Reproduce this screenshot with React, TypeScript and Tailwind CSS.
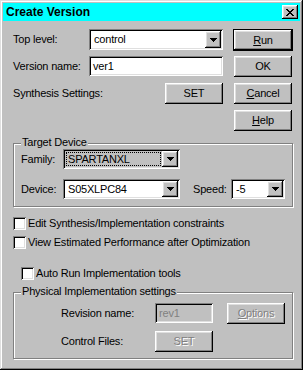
import React from 'react';

const raised = 'shadow-[inset_-1px_-1px_#000,inset_1px_1px_#fff,inset_-2px_-2px_#808080,inset_2px_2px_#dfdfdf]';
const sunken = 'shadow-[inset_1px_1px_#808080,inset_-1px_-1px_#fff,inset_2px_2px_#000,inset_-2px_-2px_#dfdfdf]';

const Arrow = () => (
    <svg width="7" height="4" viewBox="0 0 7 4" shapeRendering="crispEdges">
        <path d="M0 0h7v1H0z M1 1h5v1H1z M2 2h3v1H2z M3 3h1v1H3z" fill="#000" />
    </svg>
);

const CloseX = () => (
    <svg width="8" height="7" viewBox="0 0 8 7" shapeRendering="crispEdges">
        <path
            d="M0 0h2v1H0z M6 0h2v1H6z M1 1h2v1H1z M5 1h2v1H5z M2 2h4v1H2z M3 3h2v1H3z M2 4h4v1H2z M1 5h2v1H1z M5 5h2v1H5z M0 6h2v1H0z M6 6h2v1H6z"
            fill="#000"
        />
    </svg>
);

const Btn = ({ children, className = '', disabled = false }: { children: React.ReactNode; className?: string; disabled?: boolean }) => (
    <div
        className={`flex items-center justify-center bg-[#c0c0c0] ${raised} ${className} ${
            disabled ? 'text-[#808080] [text-shadow:1px_1px_0_#fff]' : ''
        }`}
    >
        <span className="leading-none">{children}</span>
    </div>
);

const Combo = ({ value, className = '', focus = false }: { value: string; className?: string; focus?: boolean }) => (
    <div className={`flex items-stretch p-[2px] ${sunken} ${focus ? 'bg-[#c0c0c0]' : 'bg-white'} ${className}`}>
        <div className="flex-1 flex items-center p-[1px]">
            <div className={`flex-1 h-full flex items-center pl-[1px] ${focus ? 'border border-dotted border-black' : 'border border-transparent'}`}>
                <span className="leading-none">{value}</span>
            </div>
        </div>
        <div className={`w-[16px] flex items-center justify-center bg-[#c0c0c0] ${raised}`}>
            <Arrow />
        </div>
    </div>
);

const Check = ({ label, className = '' }: { label: string; className?: string }) => (
    <div className={`flex items-center h-[13px] ${className}`}>
        <div className={`w-[13px] h-[13px] bg-white ${sunken}`} />
        <span className="ml-[2px] leading-none">{label}</span>
    </div>
);

const Group = ({ label, className = '', children }: { label: string; className?: string; children: React.ReactNode }) => (
    <div className={`relative border border-[#808080] shadow-[inset_1px_1px_#fff,1px_1px_#fff] ${className}`}>
        <span className="absolute left-[7px] top-[-7px] bg-[#c0c0c0] px-[1px] leading-none">{label}</span>
        {children}
    </div>
);

export default function App() {
    return (
        <div className="w-[303px] h-[370px] bg-[#c0c0c0] p-[3px] shadow-[inset_-1px_-1px_#000,inset_1px_1px_#dfdfdf,inset_-2px_-2px_#808080,inset_2px_2px_#fff] font-['Liberation_Sans',Arial,sans-serif] text-[11px] tracking-[-0.2px] text-black">
            {/* Title bar */}
            <div className="h-[18px] bg-[#00ffff] flex items-center justify-between pl-[3px] pr-[2px]">
                <span className="text-[12px] font-bold leading-none tracking-normal">Create Version</span>
                <div className={`w-[16px] h-[14px] bg-[#c0c0c0] flex items-center justify-center ${raised}`}>
                    <CloseX />
                </div>
            </div>

            <div className="pl-[10px] pr-[7px]">
                {/* Top area */}
                <div className="mt-[8px] flex">
                    <div className="w-[210px]">
                        <div className="flex items-center h-[21px]">
                            <span className="w-[76px] leading-none">Top level:</span>
                            <Combo value="control" className="w-[134px] h-[21px]" />
                        </div>
                        <div className="flex items-center h-[20px] mt-[6px]">
                            <span className="w-[76px] leading-none">Version name:</span>
                            <div className={`w-[134px] h-[20px] bg-white flex items-center pl-[4px] ${sunken}`}>
                                <span className="leading-none">ver1</span>
                            </div>
                        </div>
                        <div className="flex items-center h-[21px] mt-[7px]">
                            <span className="flex-1 leading-none">Synthesis Settings:</span>
                            <Btn className="w-[58px] h-[21px]">SET</Btn>
                        </div>
                    </div>
                    <div className="ml-[10px] w-[60px] flex flex-col items-center">
                        <div className="w-[60px] h-[22px] border border-black">
                            <Btn className="w-full h-full">
                                <span className="underline underline-offset-[1px]">R</span>un
                            </Btn>
                        </div>
                        <Btn className="w-[58px] h-[21px] mt-[5px]">OK</Btn>
                        <Btn className="w-[58px] h-[21px] mt-[6px]">
                            <span className="underline underline-offset-[1px]">C</span>ancel
                        </Btn>
                        <Btn className="w-[58px] h-[21px] mt-[6px]">
                            <span className="underline underline-offset-[1px]">H</span>elp
                        </Btn>
                    </div>
                </div>

                {/* Target Device */}
                <Group label="Target Device" className="mt-[12px] h-[64px] w-[280px] pt-[5px] pl-[7px]">
                    <div className="flex items-center h-[20px]">
                        <span className="w-[42px] leading-none">Family:</span>
                        <Combo value="SPARTANXL" focus className="w-[117px] h-[20px]" />
                    </div>
                    <div className="flex items-center h-[20px] mt-[10px]">
                        <span className="w-[42px] leading-none">Device:</span>
                        <Combo value="S05XLPC84" className="w-[117px] h-[20px]" />
                        <span className="ml-[13px] w-[38px] leading-none">Speed:</span>
                        <Combo value="-5" className="w-[54px] h-[20px]" />
                    </div>
                </Group>

                {/* Options */}
                <Check label="Edit Synthesis/Implementation constraints" className="mt-[10px]" />
                <Check label="View Estimated Performance after Optimization" className="mt-[6px]" />
                <Check label="Auto Run Implementation tools" className="mt-[18px] ml-[8px]" />

                {/* Physical Implementation */}
                <Group label="Physical Implementation settings" className="mt-[12px] h-[67px] w-[280px] pt-[10px] pl-[47px]">
                    <div className="flex items-center h-[20px]">
                        <span className="w-[94px] leading-none">Revision name:</span>
                        <div className={`w-[58px] h-[20px] bg-[#c0c0c0] flex items-center pl-[4px] ${sunken}`}>
                            <span className="leading-none text-[#808080]">rev1</span>
                        </div>
                        <Btn disabled className="w-[58px] h-[21px] ml-[14px]">
                            <span className="underline underline-offset-[1px]">O</span>ptions
                        </Btn>
                    </div>
                    <div className="flex items-center h-[21px] mt-[8px]">
                        <span className="w-[94px] leading-none">Control Files:</span>
                        <Btn disabled className="w-[58px] h-[21px]">SET</Btn>
                    </div>
                </Group>
            </div>
        </div>
    );
}
